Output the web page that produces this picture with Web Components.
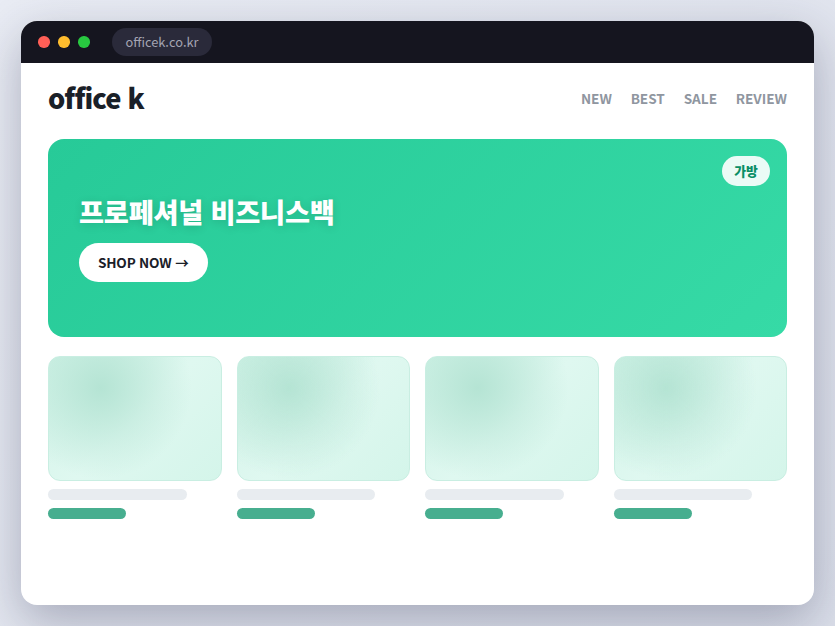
<!DOCTYPE html>
<html lang="ko"><head><meta charset="utf-8"><style>
html,body{margin:0;height:100%}
body{width:835px;height:626px;overflow:hidden;background:linear-gradient(135deg,#e9ecf4,#dbdfea);font-family:"Noto Sans CJK KR","Noto Sans",sans-serif;font-variant-ligatures:none;padding:21px;box-sizing:border-box}
</style></head><body>
<browser-window url="officek.co.kr">
<site-header brand="office k"><nav-link>NEW</nav-link><nav-link>BEST</nav-link><nav-link>SALE</nav-link><nav-link>REVIEW</nav-link></site-header>
<hero-banner badge="가방" title="프로페셔널 비즈니스백" cta="SHOP NOW →"></hero-banner>
<product-grid><product-card></product-card><product-card></product-card><product-card></product-card><product-card></product-card></product-grid>
</browser-window>
<script>
function def(name,html){customElements.define(name,class extends HTMLElement{constructor(){super();const r=this.attachShadow({mode:'open'});r.innerHTML=html.replace(/\{\{(\w+)\}\}/g,(m,k)=>this.getAttribute(k)||'')}})}
def('browser-window',`<style>:host{display:flex;flex-direction:column;width:793px;height:584px;border-radius:16px;overflow:hidden;background:#fff;box-shadow:0 16px 48px rgba(40,45,75,.32)}
.bar{height:42px;background:#15151f;display:flex;align-items:center;padding-left:17px;box-sizing:border-box;flex:none}
.d{width:11.5px;height:11.5px;border-radius:50%;margin-right:8.5px}
.u{margin-left:14px;height:28px;width:100px;box-sizing:border-box;border-radius:14px;background:#2a2a3a;color:#a4a4b2;font:12.8px/28px "Noto Sans CJK KR","Noto Sans",sans-serif;text-align:center}
.m{padding:0 27px;flex:1;display:flex;flex-direction:column}</style>
<div class="bar"><span class="d" style="background:#ff5f57"></span><span class="d" style="background:#febc2e"></span><span class="d" style="background:#28c840"></span><span class="u">{{url}}</span></div><div class="m"><slot></slot></div>`);
def('site-header',`<style>:host{display:flex;justify-content:space-between;align-items:flex-start;height:76px;flex:none;box-sizing:border-box;padding-top:14px}
.b{font-size:27.2px;line-height:40px;font-weight:800;color:#1a2028;letter-spacing:-.8px}
nav{display:flex;gap:18.8px;padding-top:9px}</style><span class="b">{{brand}}</span><nav><slot></slot></nav>`);
def('nav-link',`<style>:host{display:block;font-size:13.6px;line-height:24px;font-weight:700;color:#8f96a0;letter-spacing:-.02px}</style><slot></slot>`);
def('hero-banner',`<style>:host{display:flex;flex-direction:column;align-items:flex-start;justify-content:center;position:relative;height:198px;flex:none;border-radius:16px;background:linear-gradient(135deg,#27ca98,#36daa6);padding:0 31px;box-sizing:border-box}
h1{margin:-4px 0 12px;font-size:27.2px;line-height:40px;font-weight:800;letter-spacing:-.2px;color:#fff;text-shadow:0 2px 10px rgba(0,0,0,.14)}
.c{height:39px;line-height:39px;padding:0 19px;border-radius:20px;background:#fff;color:#1a2028;font-size:13.6px;font-weight:700;letter-spacing:-.2px}
.t{position:absolute;top:17px;right:17px;height:30px;width:48px;line-height:30px;text-align:center;border-radius:15px;background:rgba(255,255,255,.9);color:#0a8f66;font-size:12.8px;font-weight:800}</style>
<span class="t">{{badge}}</span><h1>{{title}}</h1><span class="c">{{cta}}</span>`);
def('product-grid',`<style>:host{display:grid;grid-template-columns:repeat(4,1fr);gap:15px;margin-top:19px}</style><slot></slot>`);
def('product-card',`<style>:host{display:block}
.i{height:125px;box-sizing:border-box;border:1px solid #c9eee2;border-radius:12px;background:radial-gradient(circle at 30% 25%,#b5e4d4,transparent 60%),linear-gradient(135deg,#d2f3e8,#dff8f0 50%,#d4f5ea)}
.a{height:11px;width:80%;background:#e8ecf0;border-radius:6px;margin-top:8px}
.p{height:11px;width:45%;background:#47ae8f;border-radius:6px;margin-top:8px}</style><div class="i"></div><div class="a"></div><div class="p"></div>`);
</script></body></html>
